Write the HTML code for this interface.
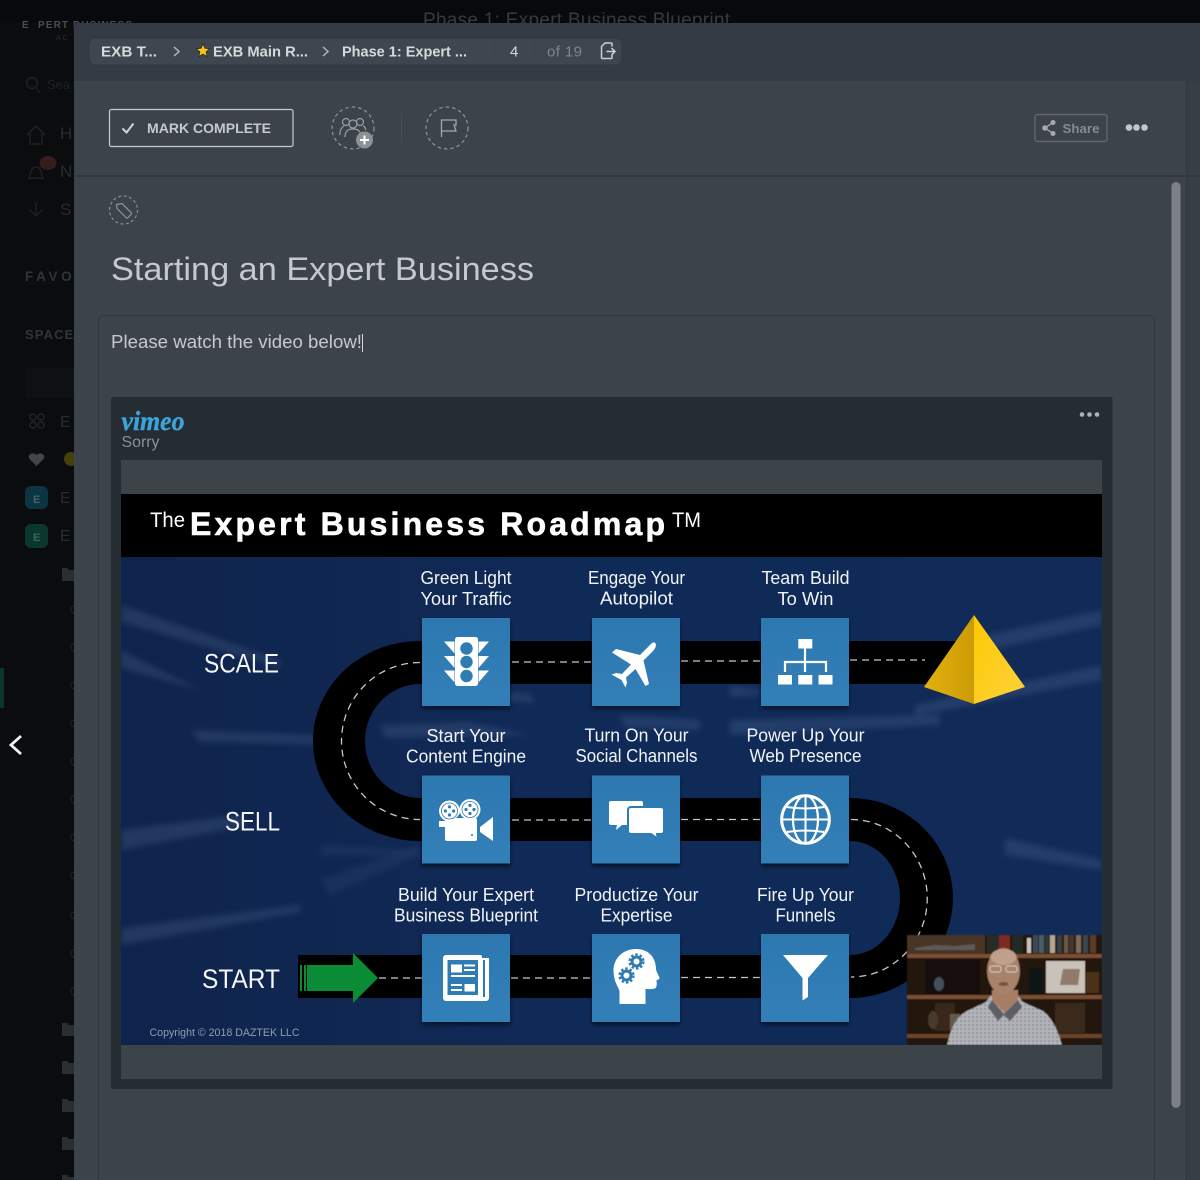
<!DOCTYPE html>
<html lang="en"><head><meta charset="utf-8"><title>Starting an Expert Business</title>
<style>
html,body{margin:0;padding:0;background:#0a0c0e;width:1200px;height:1180px;overflow:hidden}
svg{display:block;font-family:"Liberation Sans",sans-serif}
</style></head><body>
<svg width="1200" height="1180" viewBox="0 0 1200 1180" xmlns="http://www.w3.org/2000/svg">
<defs>
<linearGradient id="bl" x1="0" y1="0" x2="1" y2="0"><stop offset="0" stop-color="#0f244c"/><stop offset=".5" stop-color="#102a58"/><stop offset="1" stop-color="#112a58"/></linearGradient>
<linearGradient id="tile" x1="0" y1="0" x2="0" y2="1"><stop offset="0" stop-color="#2d78b0"/><stop offset="1" stop-color="#327fb8"/></linearGradient>
<linearGradient id="pl" x1="0" y1="0" x2="1" y2="0"><stop offset="0" stop-color="#e2b00f"/><stop offset="1" stop-color="#cc9c05"/></linearGradient>
<linearGradient id="pr" x1="0" y1="0" x2="1" y2="1"><stop offset="0" stop-color="#fdc902"/><stop offset="1" stop-color="#fdd23c"/></linearGradient>
<filter id="b2" x="-20%" y="-50%" width="140%" height="200%"><feGaussianBlur stdDeviation="3"/></filter>
<filter id="b1"><feGaussianBlur stdDeviation=".6"/></filter>
<filter id="bt"><feGaussianBlur stdDeviation=".3"/></filter>
<filter id="sh" x="-10%" y="-10%" width="120%" height="120%"><feDropShadow dx="0" dy="3" stdDeviation="2" flood-color="#000" flood-opacity=".55"/></filter>
<clipPath id="slide"><rect x="121" y="494" width="981" height="551"/></clipPath>
<pattern id="chk" width="4" height="4" patternUnits="userSpaceOnUse"><rect width="4" height="4" fill="#b4b6bb"/><rect width="2" height="2" fill="#8d8f96"/></pattern>
</defs>

<!-- sidebar -->
<rect width="1200" height="1180" fill="#0a0c0e"/>
<rect width="1200" height="23" fill="#07090d"/>
<text x="22" y="28" font-size="10" font-weight="700" fill="#4a4f54" letter-spacing="2.6">E</text>
<text x="38" y="28" font-size="10" font-weight="700" fill="#4a4f54" textLength="94" lengthAdjust="spacing">PERT BUSINESS</text>
<text x="56" y="40" font-size="7" fill="#2c3034" letter-spacing="2">AC</text>
<text x="423" y="26" font-size="19" fill="#373b41" textLength="307">Phase 1: Expert Business Blueprint</text>
<circle cx="32" cy="83" r="5.5" fill="none" stroke="#1e2225" stroke-width="1.4"/><path d="M36 88l4 5" stroke="#1e2225" stroke-width="1.4"/>
<text x="47" y="89" font-size="13" fill="#1e2225">Sea</text>
<path d="M27 135l9-9 9 9M30 133v11h12v-11" fill="none" stroke="#1e2225" stroke-width="1.4"/>
<text x="60" y="139" font-size="17" fill="#282c30">H</text>
<path d="M29 178c2-3 1-11 7-11s5 8 7 11z" fill="none" stroke="#1e2225" stroke-width="1.4"/>
<ellipse cx="48" cy="163" rx="8.5" ry="7" fill="#351c1d"/>
<text x="60" y="177" font-size="17" fill="#282c30">N</text>
<path d="M36 202v14M30 210l6 6 6-6" fill="none" stroke="#1e2225" stroke-width="1.4"/>
<text x="60" y="215" font-size="17" fill="#282c30">S</text>
<text x="25" y="281" font-size="13.500" font-weight="700" fill="#303438" textLength="60">FAVOR</text>
<text x="25" y="339" font-size="13" font-weight="700" fill="#303438" textLength="58">SPACES</text>
<rect x="26" y="368" width="48" height="30" fill="#0e1114"/>
<g fill="none" stroke="#212528" stroke-width="1.400"><circle cx="33" cy="417" r="3"/><circle cx="41" cy="417" r="3"/><circle cx="33" cy="425" r="3"/><circle cx="41" cy="425" r="3"/></g>
<text x="60" y="427" font-size="16" fill="#282c30">E</text>
<path d="M36.500 466l-7-7c-3-4 3-8 7-4 4-4 10 0 7 4z" fill="#42454a"/>
<circle cx="71" cy="459" r="7" fill="#45410a"/>
<rect x="25" y="486" width="23" height="23" rx="6" fill="#0c3443"/><text x="33" y="503" font-size="11" font-weight="700" fill="#3f626d">E</text>
<text x="60" y="503" font-size="16" fill="#282c30">E</text>
<rect x="25" y="524" width="23" height="24" rx="6" fill="#0a382f"/><text x="33" y="541" font-size="11" font-weight="700" fill="#406356">E</text>
<text x="60" y="541" font-size="16" fill="#282c30">E</text>
<g fill="#2b2e31"><path d="M62 568h5l2 2h5v11H62z"/><path d="M62 1023h5l2 2h5v11H62z"/><path d="M62 1061h5l2 2h5v11H62z"/><path d="M62 1099h5l2 2h5v11H62z"/><path d="M62 1137h5l2 2h5v11H62z"/><path d="M62 1175h5l2 2h5v4H62z"/></g>
<g fill="none" stroke="#212528"><path d="M74 606a3 3 0 0 0-3 4 3 3 0 0 0 3 3M74 644a3 3 0 0 0-3 4 3 3 0 0 0 3 3M74 682a3 3 0 0 0-3 4 3 3 0 0 0 3 3M74 720a3 3 0 0 0-3 4 3 3 0 0 0 3 3M74 758a3 3 0 0 0-3 4 3 3 0 0 0 3 3M74 796a3 3 0 0 0-3 4 3 3 0 0 0 3 3M74 834a3 3 0 0 0-3 4 3 3 0 0 0 3 3M74 872a3 3 0 0 0-3 4 3 3 0 0 0 3 3M74 912a3 3 0 0 0-3 4 3 3 0 0 0 3 3M74 950a3 3 0 0 0-3 4 3 3 0 0 0 3 3M74 988a3 3 0 0 0-3 4 3 3 0 0 0 3 3"/></g>
<rect x="0" y="668" width="4" height="40" fill="#0c332c"/>
<path d="M21 736l-10 9 10 9" fill="none" stroke="#f2f3f4" stroke-width="2.800"/>

<!-- panel -->
<rect x="74" y="23" width="1126" height="1157" fill="#3c434a"/>
<rect x="74" y="23" width="1126" height="58" fill="#343b44"/>
<rect x="1186" y="81" width="14" height="1099" fill="#373e46"/>
<rect x="1186" y="81" width="1" height="1099" fill="#30363d"/>
<rect x="74" y="175" width="1126" height="2" fill="#32383f"/>
<rect x="1171.500" y="182" width="9" height="926" rx="4.500" fill="#7b8187"/>

<!-- breadcrumb -->
<rect x="89" y="38" width="533" height="27" rx="7" fill="#3e4650" stroke="#323840" stroke-width="1"/>
<g font-size="15" font-weight="700" fill="#d6d9dc">
<text x="101" y="56.500" textLength="56" lengthAdjust="spacingAndGlyphs">EXB T...</text>
<text x="213" y="56.500" textLength="95" lengthAdjust="spacingAndGlyphs">EXB Main R...</text>
<text x="342" y="56.500" textLength="125" lengthAdjust="spacingAndGlyphs">Phase 1: Expert ...</text>
</g>
<g fill="none" stroke="#b3b7bb" stroke-width="1.500"><path d="M174 47l5 4.500-5 4.500M323 47l5 4.500-5 4.500"/></g>
<path d="M203 44l1.900 4.400 4.700.4-3.600 3.100 1.100 4.600-4.100-2.500-4.100 2.500 1.100-4.600-3.600-3.100 4.700-.4z" fill="#f6c41a" stroke="#1d1d14" stroke-width=".6"/>
<path d="M494.500 43v16M534.500 43v16" stroke="#38404a"/>
<text x="510" y="56.500" font-size="15" fill="#d6d9dc" textLength="9">4</text>
<text x="547" y="56.500" font-size="15" fill="#7f858c" textLength="35">of 19</text>
<path d="M612 46.500v-2.500a1 1 0 0 0-1-1h-6l-3.500 3.500v11a1 1 0 0 0 1 1h8.500a1 1 0 0 0 1-1v-3M606.500 51.500h8M611.500 48l3.500 3.500-3.500 3.500" fill="none" stroke="#cdd0d3" stroke-width="1.500"/>

<!-- toolbar -->
<rect x="109.500" y="109.500" width="183.500" height="37" rx="2" fill="none" stroke="#c8ccd0" stroke-width="1.200"/>
<path d="M122.500 128.500l4 4 7-9" fill="none" stroke="#d2d5d8" stroke-width="2"/>
<text x="147" y="133" font-size="14" font-weight="700" fill="#c6cacd" textLength="124" lengthAdjust="spacingAndGlyphs">MARK COMPLETE</text>
<circle cx="353" cy="128" r="21" fill="none" stroke="#8f9499" stroke-width="1.200" stroke-dasharray="3.500 3"/>
<g fill="none" stroke="#9a9fa4" stroke-width="1.200"><circle cx="346" cy="122" r="3.500"/><circle cx="360" cy="122" r="3.500"/><circle cx="353" cy="124" r="4"/><path d="M340 135c-.5-5 2-8 4-9M366 130c-1-3-2-4-3-4M345 137c0-6 3-8 8-8s7 2 8 6"/></g>
<circle cx="364.500" cy="140" r="8.500" fill="#8c9196"/>
<path d="M364.500 135.500v9M360 140h9" stroke="#fff" stroke-width="2"/>
<rect x="401" y="113" width="1" height="30" fill="#464d54"/>
<circle cx="447" cy="128" r="21" fill="none" stroke="#8f9499" stroke-width="1.200" stroke-dasharray="3.500 3"/>
<path d="M441.500 137v-17h14.500v5l-2 0 2 6h-14.500" fill="none" stroke="#a5a9ae" stroke-width="1.300"/>
<rect x="1035" y="114.500" width="72" height="27" rx="2.500" fill="none" stroke="#666c72" stroke-width="1.200"/>
<g fill="#a6aaae"><circle cx="1045" cy="128" r="2.800"/><circle cx="1053" cy="122.500" r="2.500"/><circle cx="1053" cy="133.500" r="2.500"/></g>
<path d="M1045 128l8-5.500M1045 128l8 5.500" stroke="#a6aaae" stroke-width="1.300"/>
<text x="1062.500" y="133" font-size="13" font-weight="700" fill="#858b90" textLength="37" lengthAdjust="spacingAndGlyphs">Share</text>
<g fill="#c3c7cb"><circle cx="1129" cy="127.500" r="3.300"/><circle cx="1136.500" cy="127.500" r="3.300"/><circle cx="1144.500" cy="127.500" r="3.300"/></g>

<!-- content -->
<circle cx="123.500" cy="210" r="14" fill="none" stroke="#8f9499" stroke-width="1.100" stroke-dasharray="3 2.500"/>
<path d="M116.500 205l5.500-1 9 9a1.500 1.500 0 0 1 0 2l-3 3a1.500 1.500 0 0 1-2 0l-9-9z" transform="translate(0 -.5)" fill="none" stroke="#8f9499" stroke-width="1.200"/>
<text x="111" y="280" font-size="32" fill="#c5c9cc" textLength="423" lengthAdjust="spacingAndGlyphs">Starting an Expert Business</text>
<rect x="98.500" y="315.500" width="1056" height="900" rx="4" fill="none" stroke="#31373d"/>
<text x="111" y="348" font-size="18" fill="#c6cacd" textLength="251" lengthAdjust="spacingAndGlyphs">Please watch the video below!</text>
<rect x="362" y="334" width="1" height="18" fill="#d6d9dc"/>

<!-- vimeo -->
<rect x="111" y="397" width="1001.500" height="692" rx="2" fill="#252d33"/>
<text x="121.500" y="430" font-family="'Liberation Serif',serif" font-size="27" font-weight="700" font-style="italic" fill="#3da3da" stroke="#3da3da" stroke-width=".4" textLength="63" lengthAdjust="spacingAndGlyphs">vimeo</text>
<text x="121.500" y="447" font-size="16" fill="#8a9096" textLength="38" lengthAdjust="spacingAndGlyphs">Sorry</text>
<g fill="#aeb2b6"><circle cx="1082" cy="414.500" r="2.300"/><circle cx="1089.500" cy="414.500" r="2.300"/><circle cx="1097" cy="414.500" r="2.300"/></g>
<rect x="121" y="460" width="981" height="619" fill="#3c4349"/>

<!-- slide -->
<g clip-path="url(#slide)">
<rect x="121" y="557" width="981" height="488" fill="url(#bl)"/>
<g fill="#8fa9cf" opacity=".15" filter="url(#b2)">
<polygon points="121,605 280,660 280,668 121,622"/>
<polygon points="121,650 200,690 121,668"/>
<polygon points="380,725 470,722 530,735 385,738"/>
<polygon points="190,730 310,735 370,745 200,742"/>
<polygon points="500,693 530,693 535,703 500,700"/>
<polygon points="940,645 1102,610 1102,625 945,660"/>
<polygon points="915,705 1102,665 1102,680 915,716"/>
<polygon points="730,720 940,715 940,725 730,735"/>
<polygon points="1005,838 1102,860 1102,870 1005,855"/>
<polygon points="121,928 300,905 300,912 121,945"/>
<polygon points="121,830 240,815 250,825 121,850"/>
<polygon points="620,715 700,720 700,730 625,728"/>
<polygon points="730,685 760,690 760,695 730,697"/>
<polygon points="320,845 420,850 420,856 322,855" opacity=".5"/>
<polygon points="320,880 420,845 420,855 330,895" opacity=".5"/>
</g>
<rect x="121" y="494" width="981" height="63" fill="#000"/>
<text x="150" y="527" font-size="21" fill="#fff" textLength="35" lengthAdjust="spacingAndGlyphs">The</text>
<text x="190" y="535" font-size="32" font-weight="700" fill="#fff" stroke="#fff" stroke-width=".6" textLength="475" lengthAdjust="spacing">Expert Business Roadmap</text>
<text x="672" y="527" font-size="21" fill="#fff" textLength="29" lengthAdjust="spacingAndGlyphs">TM</text>

<!-- road -->
<path d="M420 641A107 100 0 0 0 420 841H850V841A50 57 0 0 1 850 955H298V998H850A103 100 0 0 0 850 798H420A55 57 0 0 1 420 684H975V641Z" fill="#000"/>
<g fill="none" stroke="#c5c8ca" stroke-width="1.300" stroke-dasharray="7 5">
<path d="M420 662.500A78.500 78.500 0 0 0 420 819.500"/>
<path d="M512 662H592M681 661H761M850 660H925"/>
<path d="M512 820H592M681 819.500H761"/>
<path d="M851 819.500A76 78.500 0 0 1 851 977"/>
<path d="M379 978H422M511 978H592M681 977.500H761"/>
</g>
<!-- arrow -->
<g fill="#0a8b35"><rect x="300" y="965" width="2" height="26"/><rect x="304" y="965" width="2" height="26"/><polygon points="307,965 353,965 353,953 378,978 353,1003 353,991 307,991"/></g>

<!-- tiles -->
<g fill="url(#tile)" filter="url(#sh)">
<rect x="422" y="618" width="88" height="88"/><rect x="592" y="618" width="88" height="88"/><rect x="761" y="618" width="88" height="88"/>
<rect x="422" y="775.500" width="88" height="88"/><rect x="592" y="775.500" width="88" height="88"/><rect x="761" y="775.500" width="88" height="88"/>
<rect x="422" y="934" width="88" height="88"/><rect x="592" y="934" width="88" height="88"/><rect x="761" y="934" width="88" height="88"/>
</g>

<!-- traffic light -->
<g fill="#fff">
<rect x="455" y="637" width="23" height="49" rx="2.500"/>
<path d="M444 641.500h10.500v12zM444 656h10.500v12zM444 670.500h10.500v12zM489 641.500h-10.500v12zM489 656h-10.500v12zM489 670.500h-10.500v12z"/>
</g>
<g fill="#2f7bb3"><circle cx="466.500" cy="648.500" r="6.200"/><circle cx="466.500" cy="662" r="6.200"/><circle cx="466.500" cy="676" r="6.200"/></g>
<!-- plane -->
<path d="M654.500 642.500C657 644 656 648 653 651L643.500 660.500 649 684 645.500 686 635.500 669 626 677.500 627 683 625.500 687.500 621.500 680 611.500 674.500 616.500 673 622 674 631 664.500 612 652.500 616 649 640 655 649.500 645.500C651 644 653 642 654.500 642.500Z" fill="#fff"/>
<!-- org chart -->
<g fill="#fff"><rect x="798.300" y="639" width="14" height="9.500"/><rect x="778" y="675" width="14" height="9.500"/><rect x="798.300" y="675" width="14" height="9.500"/><rect x="818.500" y="675" width="14" height="9.500"/></g>
<path d="M805 648v24M785 672v-10h41v10" fill="none" stroke="#fff" stroke-width="2.200"/>
<!-- globe -->
<g fill="none" stroke="#fff"><circle cx="805.500" cy="819.500" r="23.800" stroke-width="3"/><ellipse cx="805.500" cy="819.500" rx="12.500" ry="24" stroke-width="2.200"/><path d="M805.500 795.500v48M781.500 819.500h48M787 807c12 2 25 2 37 0M787 832c12-2 25-2 37 0" stroke-width="2"/></g>
<!-- camera -->
<g fill="#fff">
<circle cx="449.500" cy="811" r="10.500"/><circle cx="470" cy="809.500" r="10.500"/>
<rect x="445" y="818" width="32" height="23" rx="2"/>
<path d="M439 821h6v6h-6zM480 827l13-10v24l-13-9z"/>
</g>
<g fill="#2f7bb3"><circle cx="449.500" cy="806.800" r="1.600"/><circle cx="449.500" cy="815" r="1.600"/><circle cx="445.400" cy="811" r="1.600"/><circle cx="453.600" cy="811" r="1.600"/><circle cx="470" cy="805.400" r="1.600"/><circle cx="470" cy="813.500" r="1.600"/><circle cx="466" cy="809.500" r="1.600"/><circle cx="474" cy="809.500" r="1.600"/><circle cx="472" cy="835" r="1"/></g>
<g fill="none" stroke="#2f7bb3" stroke-width=".8"><circle cx="449.500" cy="811" r="8"/><circle cx="470" cy="809.500" r="8"/></g>
<path d="M456 818l3.500-4 3.500 4z" fill="#2f7bb3"/>
<!-- chat -->
<path d="M611 801h30a2 2 0 0 1 2 2v20a2 2 0 0 1-2 2h-19l-6 5 1-5h-6a2 2 0 0 1-2-2v-20a2 2 0 0 1 2-2z" fill="#fff"/>
<path d="M631 807h30a3 3 0 0 1 3 3v21a3 3 0 0 1-3 3h-4l1 5-7-5h-20a3 3 0 0 1-3-3v-21a3 3 0 0 1 3-3z" fill="#fff" stroke="#2f7bb3" stroke-width="2"/>
<!-- news -->
<path d="M443 958a3 3 0 0 1 3-3h34a2 2 0 0 1 2 2v1h7v40a3 3 0 0 1-3 3h-40a3 3 0 0 1-3-3z" fill="#fff"/>
<rect x="447.500" y="960" width="30.500" height="35" fill="#2f7bb3"/>
<rect x="483" y="960" width="2" height="37" fill="#2f7bb3"/>
<g fill="#fff"><rect x="451" y="964.500" width="11" height="8"/><rect x="464" y="964.500" width="11" height="2"/><rect x="464" y="969" width="11" height="2"/><rect x="451" y="975" width="24" height="2"/><rect x="451" y="984" width="11" height="2"/><rect x="451" y="989" width="11" height="2"/><rect x="464.500" y="984" width="10.500" height="7.500"/></g>
<!-- head -->
<path d="M636 949c13 0 20 9 20 20 0 2 3 7 3.500 9 .3 1.500-3 2-3 2 0 2 1 6-1 8-1 1.500-8 1-10 1v15h-26v-13c-1-4-6-9-6-21 0-11 9-21 22.500-21z" fill="#fff"/>
<g fill="none" stroke="#2f7bb3"><circle cx="636.500" cy="961.500" r="4.500" stroke-width="3"/><circle cx="636.500" cy="961.500" r="7" stroke-width="2.200" stroke-dasharray="2.500 2"/><circle cx="626.500" cy="975.500" r="4.500" stroke-width="3"/><circle cx="626.500" cy="975.500" r="7" stroke-width="2.200" stroke-dasharray="2.500 2"/></g>
<!-- funnel -->
<path d="M783 955h45l-20 23v19l-5.500 3.500V978z" fill="#fff"/>
<!-- pyramid -->
<polygon points="974,615 924,687 974,704" fill="url(#pl)"/>
<polygon points="974,615 1025,687 974,704" fill="url(#pr)"/>

<!-- labels -->
<g filter="url(#bt)">
<g fill="#f1f4f7" font-size="18" text-anchor="middle">
<text x="466" y="584" textLength="91" lengthAdjust="spacingAndGlyphs">Green Light</text><text x="466" y="605" textLength="91" lengthAdjust="spacingAndGlyphs">Your Traffic</text>
<text x="636.500" y="584" textLength="97" lengthAdjust="spacingAndGlyphs">Engage Your</text><text x="636.500" y="604.500" textLength="73" lengthAdjust="spacingAndGlyphs">Autopilot</text>
<text x="805.500" y="584" textLength="88" lengthAdjust="spacingAndGlyphs">Team Build</text><text x="805.500" y="605" textLength="56" lengthAdjust="spacingAndGlyphs">To Win</text>
<text x="466" y="742" textLength="79" lengthAdjust="spacingAndGlyphs">Start Your</text><text x="466" y="762.500" textLength="120" lengthAdjust="spacingAndGlyphs">Content Engine</text>
<text x="636.500" y="741.500" textLength="104" lengthAdjust="spacingAndGlyphs">Turn On Your</text><text x="636.500" y="762" textLength="122" lengthAdjust="spacingAndGlyphs">Social Channels</text>
<text x="805.500" y="741.500" textLength="118" lengthAdjust="spacingAndGlyphs">Power Up Your</text><text x="805.500" y="762" textLength="112" lengthAdjust="spacingAndGlyphs">Web Presence</text>
<text x="466" y="901" textLength="136" lengthAdjust="spacingAndGlyphs">Build Your Expert</text><text x="466" y="921.500" textLength="144" lengthAdjust="spacingAndGlyphs">Business Blueprint</text>
<text x="636.500" y="901" textLength="124" lengthAdjust="spacingAndGlyphs">Productize Your</text><text x="636.500" y="921.500" textLength="72" lengthAdjust="spacingAndGlyphs">Expertise</text>
<text x="805.500" y="901" textLength="97" lengthAdjust="spacingAndGlyphs">Fire Up Your</text><text x="805.500" y="921.500" textLength="60" lengthAdjust="spacingAndGlyphs">Funnels</text>
</g>
<g fill="#f4f6f8" font-size="27">
<text x="204" y="672.500" textLength="75" lengthAdjust="spacingAndGlyphs">SCALE</text>
<text x="225" y="830.500" textLength="55" lengthAdjust="spacingAndGlyphs">SELL</text>
<text x="202" y="988" textLength="78" lengthAdjust="spacingAndGlyphs">START</text>
</g>
<text x="149.500" y="1036" font-size="11" fill="#8f9db3" textLength="150" lengthAdjust="spacingAndGlyphs">Copyright © 2018 DAZTEK LLC</text>
</g>

<!-- video -->
<g filter="url(#b1)">
<rect x="907" y="935" width="195" height="110" fill="#24170f"/>
<rect x="907" y="935" width="78" height="19" fill="#4a3526"/>
<path d="M915 948l20-3 20 1 20-2v6h-60z" fill="#5d5a54"/>
<rect x="907" y="954" width="195" height="4" fill="#7a5030"/>
<rect x="907" y="995" width="195" height="4" fill="#7a5030"/>
<rect x="907" y="1034" width="195" height="4" fill="#6a4529"/>
<rect x="987" y="935" width="12" height="18" fill="#2c2a28"/><rect x="999" y="935" width="11" height="14" fill="#7c2a23"/><rect x="1012" y="935" width="11" height="18" fill="#232a22"/>
<g><rect x="1027" y="938" width="4" height="15" fill="#c9c4b8"/><rect x="1033" y="935" width="5" height="18" fill="#3d4a5a"/><rect x="1039" y="935" width="5" height="18" fill="#4a5d66"/><rect x="1045" y="935" width="4" height="18" fill="#30383e"/><rect x="1050" y="935" width="5" height="18" fill="#b5a88e"/><rect x="1057" y="935" width="5" height="18" fill="#34414c"/><rect x="1064" y="935" width="4" height="18" fill="#6d5a44"/><rect x="1069" y="935" width="5" height="18" fill="#45382d"/><rect x="1076" y="935" width="5" height="18" fill="#7a6b58"/><rect x="1083" y="935" width="5" height="18" fill="#3c4650"/><rect x="1090" y="935" width="6" height="18" fill="#5b3a28"/></g>
<rect x="1046" y="961" width="39" height="32" fill="#c8c2b8"/>
<polygon points="1063,969 1080,969 1078,985 1060,985" fill="#8f7a6c"/>
<rect x="1086" y="972" width="13" height="21" fill="#4a3118"/>
<rect x="1029" y="968" width="14" height="26" fill="#0e1216"/>
<rect x="925" y="960" width="55" height="34" fill="#14100d"/>
<ellipse cx="939" cy="984" rx="5" ry="7" fill="#45505a"/>
<rect x="935" y="1003" width="20" height="28" fill="#3a281a"/>
<ellipse cx="933" cy="1020" rx="5" ry="9" fill="#4a3a2c"/>
<rect x="950" y="1014" width="10" height="16" fill="#665a48"/>
<rect x="1055" y="1003" width="30" height="30" fill="#3a2a1c"/>
<path d="M947 1045c4-18 10-30 22-35l17-8 4-6h28l5 6 20 9c9 6 16 22 19 34z" fill="url(#chk)"/>
<path d="M992 1000l12 14 14-14 4 7-12 14-6-6-6 6-10-14z" fill="#5d5d63"/>
<path d="M992 990h26v10l-13 13-13-13z" fill="#a77d66"/>
<ellipse cx="1003.500" cy="971" rx="16.500" ry="23" fill="#a8826b"/>
<ellipse cx="1003.500" cy="957" rx="13" ry="8" fill="#c0a08c"/>
<g fill="none" stroke="#dccbbd" stroke-width="1"><rect x="990" y="966" width="11" height="6" rx="2"/><rect x="1006" y="966" width="11" height="6" rx="2"/></g>
<ellipse cx="1003.500" cy="984" rx="5" ry="2" fill="#7a5243"/>
</g>
</g>
</svg>
</body></html>
